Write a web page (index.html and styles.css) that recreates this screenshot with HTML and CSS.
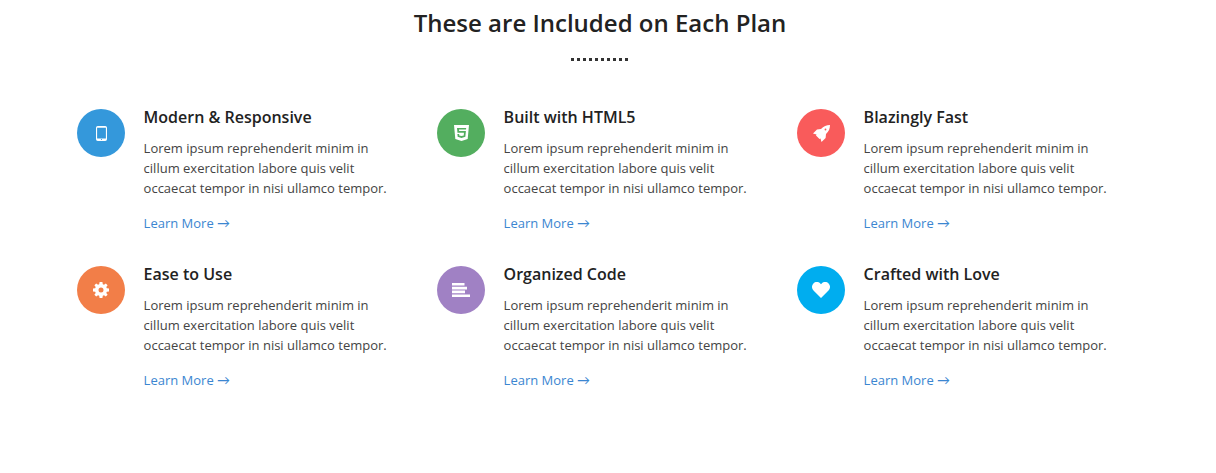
FILE: index.html
```html
<!DOCTYPE html>
<html lang="en">
<head>
    <meta charset="UTF-8">
    <title>Features</title>
    <link rel="stylesheet" href="styles.css">
</head>
<body>
    <section class="features">
        <h2 class="features-title">These are Included on Each Plan</h2>
        <div class="dots"></div>
        <div class="feature-grid">
            <div class="feature">
                <div class="circle blue">
                    <svg width="11" height="15" viewBox="0 0 11 15"><path fill="#fff" fill-rule="evenodd" d="M1.800 0h7.400A1.800 1.800 0 0 1 11 1.800v11.400a1.800 1.800 0 0 1-1.800 1.800H1.800A1.800 1.800 0 0 1 0 13.200V1.800A1.800 1.800 0 0 1 1.800 0zM1.100 1.800v10.600h8.800V1.800zM5.500 12.900a.6.6 0 1 0 0 1.200.6.6 0 0 0 0-1.200z"/></svg>
                </div>
                <div class="feature-body">
                    <h3>Modern &amp; Responsive</h3>
                    <p>Lorem ipsum reprehenderit minim in cillum exercitation labore quis velit occaecat tempor in nisi ullamco tempor.</p>
                    <a href="#">Learn More <span class="arrow">&#8594;</span></a>
                </div>
            </div>
            <div class="feature">
                <div class="circle green">
                    <svg width="15" height="16" viewBox="0 0 16 18" preserveAspectRatio="none"><path fill="#fff" fill-rule="evenodd" d="M0 0h16l-1.400 15.800L8 18l-6.600-2.200zM3.200 3.400l.5 5.400h6.900l-.2 2.900-2.400.8-2.400-.8-.1-1.500H3.600l.3 3 4.100 1.400 4.100-1.400.6-6.400H5.500l-.2-1.800h7.500l.2-1.600z"/></svg>
                </div>
                <div class="feature-body">
                    <h3>Built with HTML5</h3>
                    <p>Lorem ipsum reprehenderit minim in cillum exercitation labore quis velit occaecat tempor in nisi ullamco tempor.</p>
                    <a href="#">Learn More <span class="arrow">&#8594;</span></a>
                </div>
            </div>
            <div class="feature">
                <div class="circle red">
                    <svg width="17" height="17" viewBox="0 0 17 17"><path fill="#fff" fill-rule="evenodd" d="M17 0C17 3.500 15.800 6.500 13 9L12.600 13 8.500 17 7.500 13.500 6.500 14 3 10.500 3.500 9.500 0 8.500 4 4.500 8 4C10.500 1.500 13.500 0 17 0zM12.500 3.600a.9.9 0 1 0 0 1.800.9.9 0 0 0 0-1.800z"/></svg>
                </div>
                <div class="feature-body">
                    <h3>Blazingly Fast</h3>
                    <p>Lorem ipsum reprehenderit minim in cillum exercitation labore quis velit occaecat tempor in nisi ullamco tempor.</p>
                    <a href="#">Learn More <span class="arrow">&#8594;</span></a>
                </div>
            </div>
            <div class="feature">
                <div class="circle orange">
                    <svg width="16" height="16" viewBox="0 0 16 16"><path fill="#fff" fill-rule="evenodd" d="M6.600 0h2.800l.4 2.200 1.200.5L12.800 1.400l1.800 1.800-1.300 1.800.5 1.200 2.200.4v2.800l-2.200.4-.5 1.200 1.300 1.800-1.800 1.800-1.800-1.300-1.200.5-.4 2.200H6.600l-.4-2.200-1.200-.5-1.800 1.300-1.800-1.800 1.300-1.800-.5-1.200L0 9.400V6.600l2.200-.4.500-1.200-1.300-1.800 1.800-1.800L5 2.700l1.200-.5zM8 5.500a2.500 2.500 0 1 0 0 5 2.500 2.500 0 0 0 0-5z"/></svg>
                </div>
                <div class="feature-body">
                    <h3>Ease to Use</h3>
                    <p>Lorem ipsum reprehenderit minim in cillum exercitation labore quis velit occaecat tempor in nisi ullamco tempor.</p>
                    <a href="#">Learn More <span class="arrow">&#8594;</span></a>
                </div>
            </div>
            <div class="feature">
                <div class="circle purple">
                    <svg width="18" height="14" viewBox="0 0 18 14"><path fill="#fff" d="M0 0h12.500v2.600H0zM0 3.800h15v2.600H0zM0 7.600h13v2.600H0zM0 11.400h18V14H0z"/></svg>
                </div>
                <div class="feature-body">
                    <h3>Organized Code</h3>
                    <p>Lorem ipsum reprehenderit minim in cillum exercitation labore quis velit occaecat tempor in nisi ullamco tempor.</p>
                    <a href="#">Learn More <span class="arrow">&#8594;</span></a>
                </div>
            </div>
            <div class="feature">
                <div class="circle sky">
                    <svg width="18" height="16" viewBox="0 0 18 16"><path fill="#fff" d="M9 16L1.500 8.600C-.5 6.500-.5 3.200 1.400 1.400 3.300-.5 6.500-.4 8.300 1.500L9 2.300l.7-.8c1.800-1.900 5-2 6.900-.1 1.900 1.800 1.900 5.100-.1 7.200z"/></svg>
                </div>
                <div class="feature-body">
                    <h3>Crafted with Love</h3>
                    <p>Lorem ipsum reprehenderit minim in cillum exercitation labore quis velit occaecat tempor in nisi ullamco tempor.</p>
                    <a href="#">Learn More <span class="arrow">&#8594;</span></a>
                </div>
            </div>
        </div>
    </section>
</body>
</html>
```

FILE: styles.css
```css
body {
    font-family: "Open Sans", sans-serif;
    background-color: #ffffff;
    margin: 0;
}
.features {
    padding: 7px 93px 0 77px;
}
.features-title {
    font-size: 24px;
    font-weight: 600;
    line-height: 32px;
    color: #222222;
    text-align: center;
    margin: 0;
}
.dots {
    width: 58px;
    height: 3px;
    margin: 19px auto 47px;
    background: repeating-linear-gradient(to right, #333333 0, #333333 3px, transparent 3px, transparent 6px);
}
.feature-grid {
    display: grid;
    grid-template-columns: repeat(3, 360px);
    grid-auto-rows: 157px;
}
.feature {
    display: flex;
    gap: 18.6px;
}
.circle {
    width: 48px;
    height: 48px;
    margin-top: 1px;
    border-radius: 50%;
    flex-shrink: 0;
    display: flex;
    align-items: center;
    justify-content: center;
}
.blue { background-color: #3498db; }
.green { background-color: #53ae5f; }
.red { background-color: #f95b5b; }
.orange { background-color: #f27e48; }
.purple { background-color: #a081c4; }
.sky { background-color: #00adef; }
.feature-body {
    width: 250px;
}
.feature-body h3 {
    font-size: 16px;
    font-weight: 600;
    line-height: 18px;
    color: #222222;
    margin: 0 0 12px;
}
.feature-body p {
    font-size: 13px;
    line-height: 20px;
    color: #444444;
    margin: 0 0 13px;
}
.feature-body a {
    font-size: 13px;
    line-height: 20px;
    color: #3b86d1;
    text-decoration: none;
}
.arrow {
    font-family: Lato, sans-serif;
}
```
